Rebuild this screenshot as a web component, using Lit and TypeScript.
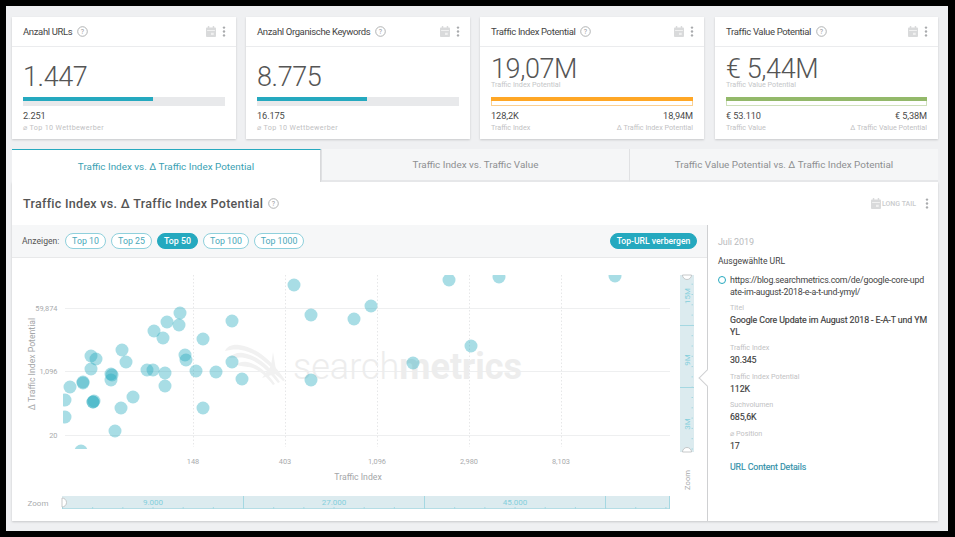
import { LitElement, html, css, svg } from "lit";
import { customElement } from "lit/decorators.js";

const TEAL = css`#25a9bf`;

const calendar = (w = 10) => html`<svg class="ico" width=${w} height=${w + 1} viewBox="0 0 11 12">
  <rect x="0" y="1.5" width="11" height="10.5" rx="1" fill="#d9dadb"></rect>
  <rect x="2" y="0" width="1.6" height="3" fill="#d9dadb"></rect>
  <rect x="7.4" y="0" width="1.6" height="3" fill="#d9dadb"></rect>
  <rect x="1.2" y="4.4" width="8.6" height="1" fill="#f3f3f3"></rect>
  <rect x="5.5" y="7.4" width="3" height="2.4" fill="#f0f0f0"></rect>
</svg>`;

const dots = html`<svg class="ico" width="4" height="11" viewBox="0 0 4 11">
  <circle cx="2" cy="1.6" r="1.2" fill="#a9abad"></circle>
  <circle cx="2" cy="5.5" r="1.2" fill="#a9abad"></circle>
  <circle cx="2" cy="9.4" r="1.2" fill="#a9abad"></circle>
</svg>`;

const help = html`<svg class="ico" width="11" height="11" viewBox="0 0 11 11">
  <circle cx="5.5" cy="5.5" r="4.8" fill="none" stroke="#a8aaac" stroke-width="0.9"></circle>
  <text x="5.5" y="8" text-anchor="middle" font-size="7" fill="#9a9c9e" font-family="Roboto, sans-serif">?</text>
</svg>`;

interface Card {
  title: string; value: string; sub?: string; pct: number; kind: "teal" | "orange" | "green";
  left: string; leftLabel: string; right?: string; rightLabel?: string;
}

const CARDS: Card[] = [
  { title: "Anzahl URLs", value: "1.447", pct: 64.3, kind: "teal", left: "2.251", leftLabel: "⌀ Top 10 Wettbewerber" },
  { title: "Anzahl Organische Keywords", value: "8.775", pct: 54.4, kind: "teal", left: "16.175", leftLabel: "⌀ Top 10 Wettbewerber" },
  { title: "Traffic Index Potential", value: "19,07M", sub: "Traffic Index Potential", pct: 100, kind: "orange", left: "128,2K", leftLabel: "Traffic Index", right: "18,94M", rightLabel: "Δ Traffic Index Potential" },
  { title: "Traffic Value Potential", value: "€ 5,44M", sub: "Traffic Value Potential", pct: 100, kind: "green", left: "€ 53.110", leftLabel: "Traffic Value", right: "€ 5,38M", rightLabel: "Δ Traffic Value Potential" },
];

const POINTS: [number, number][] = [
  [294, 285], [311, 315], [180, 313], [232, 321], [167, 322], [179, 325], [154, 331], [163, 338], [203, 339],
  [122, 350], [91, 356], [96, 359], [126, 362], [185, 355], [186, 360], [232, 362], [91, 369], [111, 374], [112, 375],
  [111, 380], [147, 370], [153, 370], [165, 373], [165, 386], [196, 371], [216, 372], [242, 379], [311, 380], [83, 383],
  [83, 382], [70, 387], [93, 402], [94, 401], [93, 402], [133, 397], [121, 408], [203, 408], [65, 400], [65, 417],
  [115, 431], [81, 451], [449, 280], [499, 277], [615, 276], [371, 306], [354, 319], [471, 346], [413, 363],
];

@customElement("score-card")
class ScoreCard extends LitElement {
  static properties = { data: { attribute: false } };
  declare data: Card;
  static styles = css`
    :host { display: block; background: #fff; box-shadow: 0 1px 2px rgba(0,0,0,.16); height: 122px; }
    .head { height: 29px; border-bottom: 1px solid #ebecee; display: flex; align-items: center; padding: 0 10px 0 11px; gap: 5px; }
    .title { font-size: 9.5px; color: #444; letter-spacing: -.36px; }
    .grow { flex: 1; }
    .ico { display: block; flex: none; }
    .tools { display: flex; align-items: center; gap: 6px; }
    .body { padding: 0 11px; }
    .top { height: 50px; padding-top: 18px; box-sizing: border-box; }
    .top.sub { padding-top: 10px; }
    .num { font-size: 27px; line-height: 24px; font-weight: 300; color: #555; letter-spacing: -.4px; }
    .sublabel { font-size: 7.2px; line-height: 8px; color: #c4c6c8; }
    .bar { height: 9px; background: #e8e9eb; }
    .fill { height: 4px; }
    .teal .fill { background: ${TEAL}; }
    .orange { background: #fff; }
    .orange .fill { background: #ffa726; }
    .orange .rest { height: 5px; box-sizing: border-box; border: 1px solid #fcd08f; border-top: 0; }
    .green { background: #fff; }
    .green .fill { background: #93b96a; }
    .green .rest { height: 5px; box-sizing: border-box; border: 1px solid #cfe0bc; border-top: 0; }
    .foot { display: flex; justify-content: space-between; padding-top: 4px; }
    .foot .r { text-align: right; }
    .v { font-size: 9.2px; line-height: 12px; color: #4a4a4a; letter-spacing: -.1px; }
    .l { font-size: 7.2px; line-height: 11px; color: #bfc1c3; }
    .l.wide { letter-spacing: .32px; }
  `;
  render() {
    const d = this.data;
    return html`
      <div class="head">
        <span class="title">${d.title}</span>${help}<span class="grow"></span>
        <span class="tools">${calendar()}${dots}</span>
      </div>
      <div class="body">
        <div class="top ${d.sub ? "sub" : ""}">
          <div class="num">${d.value}</div>
          ${d.sub ? html`<div class="sublabel">${d.sub}</div>` : ""}
        </div>
        <div class="bar ${d.kind}">
          <div class="fill" style="width:${d.pct}%"></div><div class="rest"></div>
        </div>
        <div class="foot">
          <div><div class="v">${d.left}</div><div class="l ${d.right ? "" : "wide"}">${d.leftLabel}</div></div>
          ${d.right ? html`<div class="r"><div class="v">${d.right}</div><div class="l">${d.rightLabel}</div></div>` : ""}
        </div>
      </div>`;
  }
}

@customElement("scatter-chart")
class ScatterChart extends LitElement {
  static styles = css`
    :host { display: block; }
    svg { display: block; font-family: Roboto, sans-serif; }
  `;
  render() {
    const vx = [193, 285, 377, 469, 561];
    const vxl = ["148", "403", "1,096", "2,980", "8,103"];
    const ticksX: number[] = [];
    for (let x = 62.5; x < 671; x += 30.17) ticksX.push(x);
    const ticksY: number[] = [];
    for (let y = 449; y > 276; y -= 10.3) ticksY.push(y);
    return html`<svg width="695" height="263" viewBox="12 258 695 263">
      <defs><clipPath id="plot"><rect x="63" y="275" width="608" height="174"></rect></clipPath></defs>

      ${[308.5, 371.5, 435.5].map((y) => svg`<line x1="65" x2="670" y1=${y} y2=${y} stroke="#eeeff0"></line>`)}
      ${vx.map((x) => svg`<line x1=${x + 0.5} x2=${x + 0.5} y1="275" y2="447" stroke="#e6e7e8" stroke-dasharray="1.5 2"></line>`)}

      <g fill="#f1f1f1">
        <path d="M225 351c2-5 8-7 14-6 16 2 32 14 46 35l-2 1c-14-18-28-29-42-31-6-1-11 0-16 1z"></path>
        <path d="M229 358c3-4 9-6 14-5 13 2 26 12 37 29l-2 1c-11-14-22-23-33-25-6-1-11 0-16 0z"></path>
        <path d="M236 365c3-3 7-4 11-3 10 2 20 10 28 22l-2 1c-8-10-16-17-25-18-5-1-9-1-12-2z"></path>
        <path d="M273 352l3 18 9 12-10-8-13 4 9-12z"></path>
      </g>
      <text x="293" y="379" font-size="36" font-weight="300" fill="#ededed">search<tspan font-weight="700">metrics</tspan></text>

      <g clip-path="url(#plot)">
        ${POINTS.map(([x, y]) => svg`<circle cx=${x} cy=${y} r="6.5" fill="rgba(37,169,191,.4)"></circle>`)}
      </g>

      <g font-size="7.4" fill="#a9abad" text-anchor="end">
        <text x="57.5" y="311">59,874</text>
        <text x="57.5" y="374">1,096</text>
        <text x="57.5" y="438">20</text>
      </g>
      <g font-size="7.4" fill="#a9abad" text-anchor="middle">
        ${vx.map((x, i) => svg`<text x=${x} y="464">${vxl[i]}</text>`)}
      </g>
      <text x="358" y="480" font-size="8.7" fill="#a4a6a8" text-anchor="middle">Traffic Index</text>
      <text transform="translate(35 364) rotate(-90)" font-size="8.7" fill="#a4a6a8" text-anchor="middle">Δ Traffic Index Potential</text>
      <text x="38" y="506" font-size="8" fill="#a9abad" text-anchor="middle">Zoom</text>
      <text transform="translate(690 480) rotate(-90)" font-size="7.6" fill="#a9abad" text-anchor="middle">Zoom</text>

      <rect x="62" y="496" width="608" height="13" fill="#dcebef"></rect>
      <line x1="62" x2="670" y1="508.5" y2="508.5" stroke="#b5dde5"></line>
      ${ticksX.map((x) => svg`<line x1=${x} x2=${x} y1="507" y2="509" stroke="#a5d8e2"></line>`)}
      ${[243.5, 424.5, 605.5, 669.5].map((x) => svg`<line x1=${x} x2=${x} y1="496" y2="509" stroke="#a5d8e2"></line>`)}
      <g font-size="8" fill="#84cfdc" text-anchor="middle">
        <text x="153" y="505">9.000</text>
        <text x="334" y="505">27.000</text>
        <text x="515" y="505">45.000</text>
      </g>
      <path d="M62 498a4.5 4.5 0 0 1 0 9z" fill="#fff" stroke="#b9bbbd" stroke-width=".8"></path>

      <rect x="680" y="275" width="14" height="177" fill="#dcebef"></rect>
      ${ticksY.map((y) => svg`<line x1="691.5" x2="693" y1=${y} y2=${y} stroke="#a5d8e2"></line>`)}
      ${[325.5, 387.5].map((y) => svg`<line x1="680" x2="694" y1=${y} y2=${y} stroke="#a5d8e2"></line>`)}
      <g font-size="8" fill="#84cfdc" text-anchor="middle">
        <text transform="translate(690 296) rotate(-90)">15M</text>
        <text transform="translate(690 360) rotate(-90)">9M</text>
        <text transform="translate(690 424) rotate(-90)">3M</text>
      </g>
      <path d="M682.5 275a4.5 4.5 0 0 0 9 0z" fill="#fff" stroke="#b9bbbd" stroke-width=".8"></path>
      <path d="M682.5 452a4.5 4.5 0 0 1 9 0z" fill="#fff" stroke="#b9bbbd" stroke-width=".8"></path>
    </svg>`;
  }
}

@customElement("url-details")
class UrlDetails extends LitElement {
  static styles = css`
    :host { display: block; position: relative; box-sizing: border-box; height: 296px; border-left: 1px solid #cfd0d2; padding: 11px 10px 0 10px; }
    .month { font-size: 9px; line-height: 12px; color: #b9bbbd; letter-spacing: -.1px; }
    .sel { font-size: 8.6px; line-height: 12px; color: #444; margin-top: 7px; }
    .url { display: flex; gap: 4px; margin-top: 7px; }
    .ring { width: 8px; height: 8px; box-sizing: border-box; border: 1px solid ${TEAL}; border-radius: 50%; margin-top: 2px; flex: none; }
    .link { font-size: 8.8px; line-height: 12px; color: #444; word-break: break-all; width: 199px; letter-spacing: -.2px; }
    .fields { margin-left: 12px; margin-top: -1px; }
    .lab { font-size: 7.2px; line-height: 10px; color: #bfc1c3; margin-top: 5.5px; }
    .val { font-size: 8.8px; line-height: 12px; color: #3c3c3c; word-break: break-all; margin-top: 1px; width: 199px; -webkit-text-stroke: .15px #3c3c3c; letter-spacing: -.1px; }
    .more { display: block; font-size: 8.8px; line-height: 12px; color: #2f8fa8; margin-top: 9px; letter-spacing: -.1px; -webkit-text-stroke: .15px #2f8fa8; }
    .notch { position: absolute; left: -7px; top: 147px; width: 12px; height: 12px; background: #fff; border-left: 1px solid #cfd0d2; border-bottom: 1px solid #cfd0d2; transform: rotate(45deg); box-sizing: border-box; }
  `;
  render() {
    const f: [string, string][] = [
      ["Titel", "Google Core Update im August 2018 - E-A-T und YMYL"],
      ["Traffic Index", "30.345"],
      ["Traffic Index Potential", "112K"],
      ["Suchvolumen", "685,6K"],
      ["⌀ Position", "17"],
    ];
    return html`
      <div class="notch"></div>
      <div class="month">Juli 2019</div>
      <div class="sel">Ausgewählte URL</div>
      <div class="url"><span class="ring"></span>
        <span class="link">https://blog.searchmetrics.com/de/google-core-update-im-august-2018-e-a-t-und-ymyl/</span></div>
      <div class="fields">
        ${f.map(([l, v]) => html`<div class="lab">${l}</div><div class="val">${v}</div>`)}
        <span class="more">URL Content Details</span>
      </div>`;
  }
}

@customElement("app-root")
class AppRoot extends LitElement {
  static styles = css`
    :host { display: block; width: 955px; height: 537px; background: #000; font-family: Roboto, "DejaVu Sans", sans-serif; overflow: hidden; }
    .page { margin: 0 7px 0 6px; position: relative; top: 6px; height: 525px; background: #eff0f2; padding: 11px 10px 0 6px; box-sizing: border-box; }
    .cards { display: grid; grid-template-columns: 224px 224px 224px 224px; column-gap: 10px; }
    score-card:last-child { margin-left: 1px; }
    .tabs { display: grid; grid-template-columns: 309px 308px 309px; height: 33px; margin-top: 10px; }
    .tab { display: flex; align-items: center; justify-content: center; font-size: 9.9px; color: #8d8f91; background: #f5f6f7; border-bottom: 2px solid #e6e7e9; border-left: 1px solid #e0e1e3; box-sizing: border-box; }
    .tab.active { background: #fff; color: #3a9fb3; border: 0; border-top: 1px solid ${TEAL}; border-right: 1px solid #d8d9db; }
    .panel { background: #fff; box-shadow: 0 1px 2px rgba(0,0,0,.16); height: 339px; }
    .phead { height: 43px; display: flex; align-items: center; padding: 0 9px 0 11px; gap: 5px; }
    .ptitle { font-size: 12.5px; font-weight: 500; color: #555; letter-spacing: .28px; }
    .grow { flex: 1; }
    .ico { display: block; flex: none; }
    .long { font-size: 7px; font-weight: 500; color: #c9cbcd; margin: 0 4px 0 -4px; }
    .pbody { display: grid; grid-template-columns: 695px 231px; }
    .tb { height: 33px; box-sizing: border-box; background: #f6f7f8; border-bottom: 1px solid #e8e9ea; display: flex; align-items: center; padding: 0 10px; gap: 5px; }
    .show { font-size: 8.6px; color: #555; width: 38px; white-space: nowrap; }
    .pill { height: 16px; box-sizing: border-box; border: 1px solid #8fd0dc; border-radius: 8px; background: #fff; color: #4aa8ba; font-size: 8.8px; display: flex; align-items: center; justify-content: center; white-space: nowrap; }
    .pill.on { background: ${TEAL}; border-color: ${TEAL}; color: #fff; font-weight: 500; }
    .p10 { width: 41px; } .p100 { width: 46px; } .p1000 { width: 50px; }
    .hide { width: 87px; margin-left: auto; font-size: 8.6px; }
  `;
  render() {
    return html`<div class="page">
      <div class="cards">${CARDS.map((c) => html`<score-card .data=${c}></score-card>`)}</div>
      <div class="tabs">
        <div class="tab active">Traffic Index vs. Δ Traffic Index Potential</div>
        <div class="tab">Traffic Index vs. Traffic Value</div>
        <div class="tab">Traffic Value Potential vs. Δ Traffic Index Potential</div>
      </div>
      <div class="panel">
        <div class="phead">
          <span class="ptitle">Traffic Index vs. Δ Traffic Index Potential</span>${help}
          <span class="grow"></span>${calendar(10)}<span class="long">LONG TAIL</span>${dots}
        </div>
        <div class="pbody">
          <div>
            <div class="tb">
              <span class="show">Anzeigen:</span>
              <span class="pill p10">Top 10</span><span class="pill p10">Top 25</span>
              <span class="pill p10 on">Top 50</span><span class="pill p100">Top 100</span>
              <span class="pill p1000">Top 1000</span>
              <span class="pill on hide">Top-URL verbergen</span>
            </div>
            <scatter-chart></scatter-chart>
          </div>
          <url-details></url-details>
        </div>
      </div>
    </div>`;
  }
}
